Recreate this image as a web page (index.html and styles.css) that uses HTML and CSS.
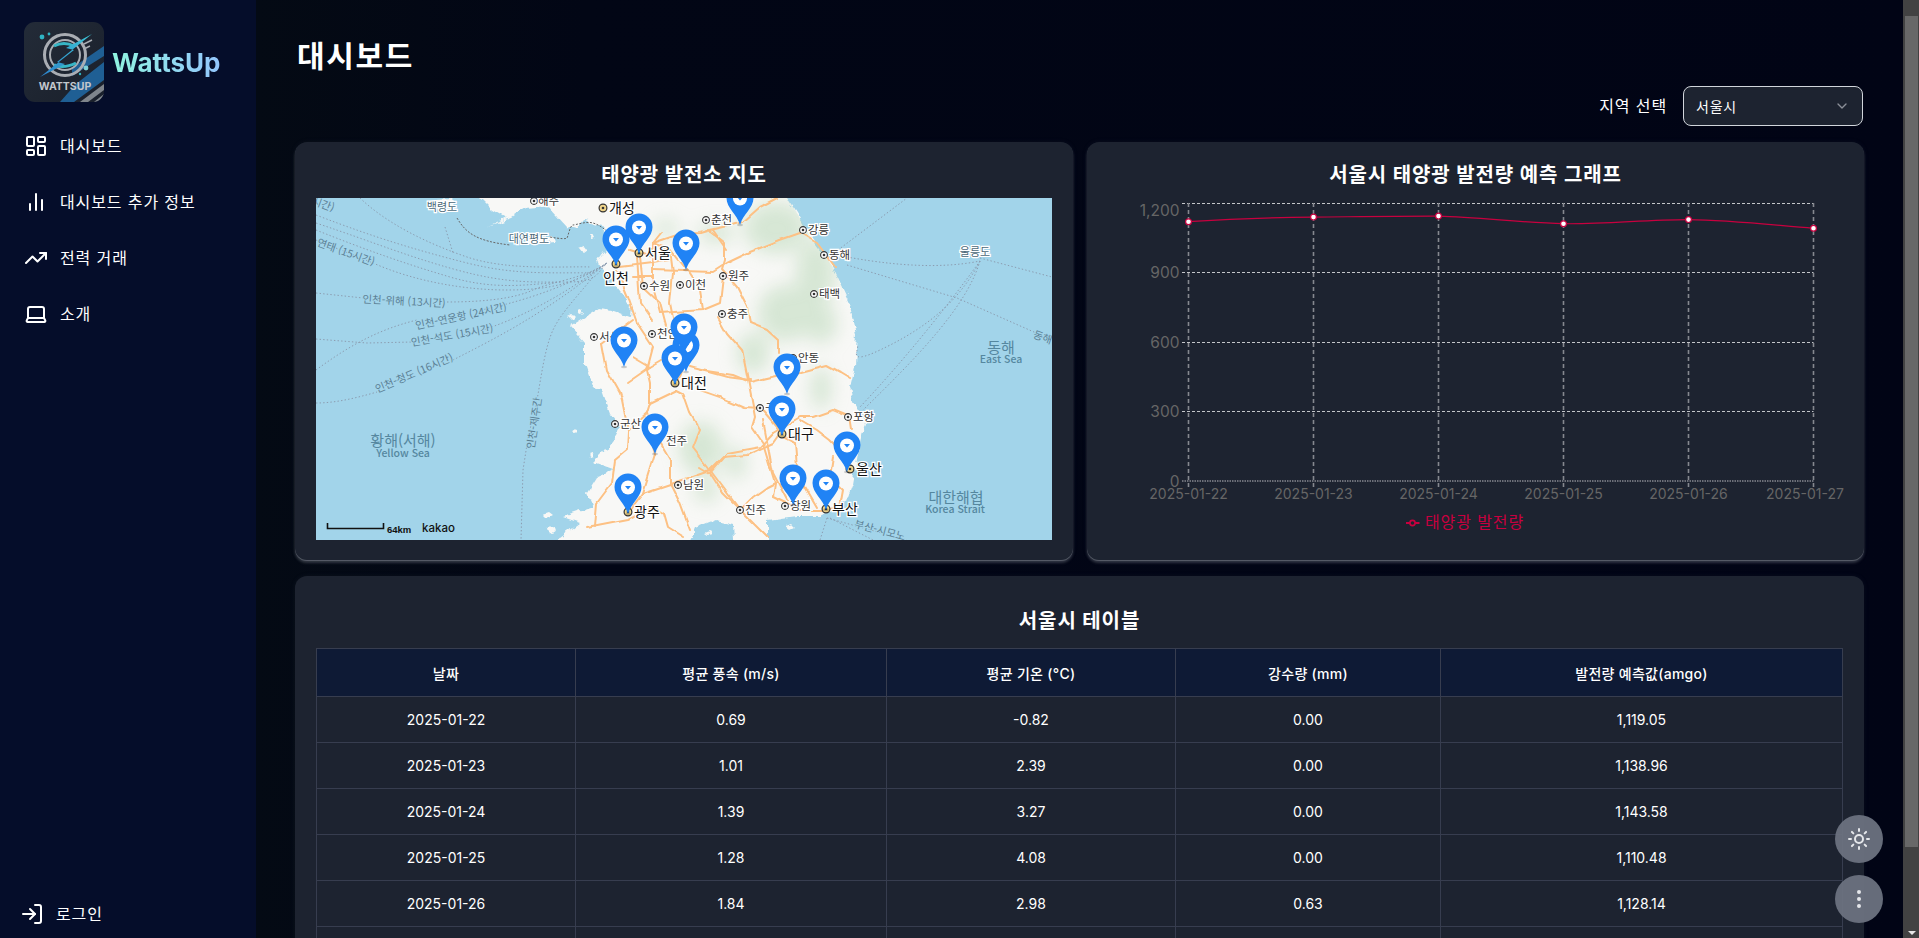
FILE: index.html
```html
<!DOCTYPE html>
<html lang="ko">
<head>
<meta charset="utf-8">
<title>WattsUp</title>
<link rel="stylesheet" href="styles.css">
</head>
<body>
<div class="app">
  <aside class="sidebar">
    <div class="brand">
      <svg class="logo" viewBox="0 0 80 80">
        <defs>
          <linearGradient id="lg" x1="0" y1="0" x2="1" y2="1"><stop offset="0" stop-color="#232b38"/><stop offset="1" stop-color="#1a202b"/></linearGradient>
          <linearGradient id="st" x1="0" y1="1" x2="1" y2="0"><stop offset="0" stop-color="#2b7fc9"/><stop offset="1" stop-color="#3cc7d6"/></linearGradient>
          <clipPath id="lc"><rect width="80" height="80" rx="11"/></clipPath>
        </defs>
        <g clip-path="url(#lc)">
          <rect width="80" height="80" fill="url(#lg)"/>
          <path d="M80 24L48 46v8L80 34zM80 40L52 62 36 80h14L80 58z" fill="#1f5f94"/>
          <path d="M80 62L56 80h8L80 68zM80 72L70 80h4L80 76z" fill="#7f858c"/>
          <circle cx="41" cy="33" r="20.5" fill="none" stroke="#a9adb3" stroke-width="3"/>
          <circle cx="41" cy="33" r="15" fill="none" stroke="#a9adb3" stroke-width="2"/>
          <path d="M30 24Q40 19 50 24M30 43Q40 47 52 41" fill="none" stroke="#37b6c6" stroke-width="3"/>
          <path d="M68 12L42 26 50 28 16 55 41 42 33 40z" fill="url(#st)"/>
          <path d="M60 22l8-4M60 27l6-3" stroke="#a9adb3" stroke-width="1.4"/>
          <circle cx="18" cy="15" r="2.4" fill="#2fb4c4"/><circle cx="25" cy="12" r="1.4" fill="#2fb4c4"/>
          <circle cx="62" cy="46" r="2.4" fill="#7fd0d6"/><circle cx="56" cy="52" r="1.2" fill="#2fb4c4"/>
          <text class="logo-text" x="41" y="67.5">WATTSUP</text>
        </g>
      </svg>
      <span class="brand-name">WattsUp</span>
    </div>
    <nav class="nav">
      <a class="nav-item"><svg class="icon" viewBox="0 0 24 24"><rect width="7" height="9" x="3" y="3" rx="1"/><rect width="7" height="5" x="14" y="3" rx="1"/><rect width="7" height="9" x="14" y="12" rx="1"/><rect width="7" height="5" x="3" y="16" rx="1"/></svg><span>대시보드</span></a>
      <a class="nav-item"><svg class="icon" viewBox="0 0 24 24"><path d="M18 20V10M12 20V4M6 20v-6"/></svg><span>대시보드 추가 정보</span></a>
      <a class="nav-item"><svg class="icon" viewBox="0 0 24 24"><polyline points="22 7 13.5 15.5 8.5 10.5 2 17"/><polyline points="16 7 22 7 22 13"/></svg><span>전력 거래</span></a>
      <a class="nav-item"><svg class="icon" viewBox="0 0 24 24"><path d="M20 16V7a2 2 0 0 0-2-2H6a2 2 0 0 0-2 2v9m16 0H4m16 0 1.28 2.55a1 1 0 0 1-.9 1.45H3.62a1 1 0 0 1-.9-1.45L4 16"/></svg><span>소개</span></a>
    </nav>
    <a class="nav-item login"><svg class="icon" viewBox="0 0 24 24"><path d="M15 3h4a2 2 0 0 1 2 2v14a2 2 0 0 1-2 2h-4"/><polyline points="10 17 15 12 10 7"/><line x1="15" y1="12" x2="3" y2="12"/></svg><span>로그인</span></a>
  </aside>

  <main class="main">
    <h1 class="page-title">대시보드</h1>
    <div class="filter-row">
      <label class="filter-label">지역 선택</label>
      <div class="select"><span>서울시</span>
        <svg class="chevron" viewBox="0 0 24 24"><path d="m6 9 6 6 6-6"/></svg>
      </div>
    </div>

    <div class="top-grid">
      <section class="card">
        <h2 class="card-title">태양광 발전소 지도</h2>
        <svg class="map" viewBox="0 0 736 342" width="736" height="342">
          <defs>
            <clipPath id="landclip"><path d="M164,0L176,12 190,20 172,28 195,20 210,10 232,8 250,28 262,30 268,22 282,26 290,36 294,48 284,60 280,66 290,72 301,90 315,108 314,119 295,112 284,110 254,129 268,145 268,165 277,190 286,192 294,215 304,229 299,239 287,255 277,265 297,272 281,279 271,295 277,309 247,319 264,325 241,342 375,342 380,330 400,322 417,326 418,342 452,342 452,322 480,318 505,318 530,304 537,285 544,245 549,225 537,205 534,189 539,169 541,135 534,105 517,69 494,38 481,15 471,0Z"/></clipPath>
            <filter id="blur" x="-30%" y="-30%" width="160%" height="160%"><feGaussianBlur stdDeviation="9"/></filter>
            <filter id="coast" x="-5%" y="-5%" width="110%" height="110%"><feTurbulence type="fractalNoise" baseFrequency=".09" numOctaves="3" seed="4"/><feDisplacementMap in="SourceGraphic" scale="8" xChannelSelector="R" yChannelSelector="G"/></filter>
            <filter id="wiggle" x="-5%" y="-5%" width="110%" height="110%"><feTurbulence type="fractalNoise" baseFrequency=".05" numOctaves="2" seed="9"/><feDisplacementMap in="SourceGraphic" scale="5" xChannelSelector="R" yChannelSelector="G"/></filter>
            <g id="pin"><ellipse cx="0" cy="0" rx="3" ry="1.2" fill="#000" opacity=".18"/><path d="M0,0C-3,-11 -13.5,-17 -13.5,-27A13.5,13.5 0 1 1 13.5,-27C13.5,-17 3,-11 0,0Z" fill="#2083f5"/><circle cx="0" cy="-26.5" r="7" fill="#fff"/><path d="M-3,-28h6l-3,3.4z" fill="#2083f5"/></g>
            <g id="dot"><circle r="3.4" fill="#fff" stroke="#333" stroke-width="1.1"/><circle r="1.3" fill="#333"/></g>
            <g id="big"><circle r="3.9" fill="#f0d58a" stroke="#333" stroke-width="1.2"/><circle r="1.3" fill="#333"/></g>
          </defs>
          <rect class="sea" width="736" height="342"/>
          <g class="land" filter="url(#coast)">
            <path d="M164,-10L164,0 176,12 190,20 172,28 195,20 210,10 232,8 250,28 262,30 268,22 282,26 290,36 294,48 284,60 280,66 290,72 301,90 315,108 314,119 295,112 284,110 254,129 268,145 268,165 277,190 286,192 294,215 304,229 299,239 287,255 277,265 297,272 281,279 271,295 277,309 247,319 264,325 241,342 241,352 375,352 375,342 380,330 400,322 417,326 418,342 418,352 452,352 452,322 480,318 505,318 530,304 537,285 544,245 549,225 537,205 534,189 539,169 541,135 534,105 517,69 494,38 481,15 471,0 471,-10Z"/>
            <path d="M264,50l5,-2 3,4 -4,3zM272,38l4,-1 2,4 -4,1zM252,118l4,-2 3,3 -3,3zM262,112l3,-1 2,3 -3,1zM226,316l6,-2 4,3 -6,3zM232,330l5,-1 2,3 -6,2zM212,40l26,-1 1,4 -26,2zM118,2l18,-1 2,8 -16,3zM430,336l6,-2 3,3 -5,2zM388,336l5,-2 2,3 -4,1zM470,328l5,-2 3,3 -4,2zM256,232l3,-1 1,3 -3,1zM274,256l3,-1 1,3 -3,1z"/>
          </g>
          <g clip-path="url(#landclip)">
            <g class="terrain" filter="url(#blur)">
              <ellipse cx="460" cy="30" rx="32" ry="26"/>
              <ellipse cx="500" cy="75" rx="20" ry="34"/>
              <ellipse cx="470" cy="115" rx="28" ry="28"/>
              <ellipse cx="505" cy="125" rx="16" ry="20"/>
              <ellipse cx="400" cy="35" rx="18" ry="10"/>
              <ellipse cx="437" cy="155" rx="16" ry="20"/>
              <ellipse cx="385" cy="250" rx="22" ry="26"/>
              <ellipse cx="390" cy="292" rx="12" ry="12"/>
              <ellipse cx="420" cy="265" rx="10" ry="16"/>
              <ellipse cx="505" cy="190" rx="10" ry="22"/>
              <ellipse cx="350" cy="30" rx="12" ry="8"/>
            </g>
          </g>
          <g class="road" filter="url(#wiggle)">
              <polyline points="337,45 364,36 384,35 394,32 417,27 427,24 444,9 461,0"/>
              <polyline points="337,72 397,74 411,65 434,54 464,42 484,35 501,45 520,70"/>
              <polyline points="392,32 409,45 409,62 406,72 421,89 431,109 434,125 451,132 462,142 462,155"/>
              <polyline points="402,119 411,135 426,152 432,182 439,219 436,229 447,245 459,285 457,299"/>
              <polyline points="384,172 417,177 434,184 464,177 484,174 511,167 524,174 534,180"/>
              <polyline points="374,169 411,179 434,182"/>
              <polyline points="384,192 404,199 427,209 444,210 466,236"/>
              <polyline points="457,235 484,219 497,219 517,212 534,219 536,232"/>
              <polyline points="467,239 479,245 481,269 487,285 501,309"/>
              <polyline points="484,222 501,232 514,242 524,252 531,269"/>
              <polyline points="517,259 514,279 527,292 524,309 510,312"/>
              <polyline points="457,299 484,312 510,312"/>
              <polyline points="424,312 437,299 451,289 459,285"/>
              <polyline points="424,312 394,272 357,285 327,295 314,312"/>
              <polyline points="271,330 312,322 337,309 347,315 351,329 367,339"/>
              <polyline points="361,192 334,205 331,215 312,232"/>
              <polyline points="361,192 367,195 374,215 384,232 377,250 394,272 407,259 431,257 457,245 464,235"/>
              <polyline points="344,245 354,262 354,285 364,305 374,332"/>
              <polyline points="286,145 291,172 304,195 306,202 312,232 311,252 299,262 296,285 281,305 279,329"/>
              <polyline points="324,59 327,89 344,105 351,132 371,159 364,179 359,185"/>
              <polyline points="301,72 312,99 321,125 337,149 331,172 334,185 334,205"/>
              <polyline points="314,52 337,59"/>
              <polyline points="304,69 337,65 354,62"/>
              <polyline points="317,79 337,79"/>
              <polyline points="337,45 337,89 344,115"/>
              <polyline points="321,59 324,105 336,122"/>
              <polyline points="354,52 357,75 354,105 359,130"/>
              <polyline points="411,52 397,32"/>
              <polyline points="344,115 387,112 404,105 407,79"/>
              <polyline points="387,112 384,92 371,72"/>
              <polyline points="286,145 317,122"/>
              <polyline points="317,159 334,169 351,159"/>
              <polyline points="311,185 334,169"/>
              <polyline points="447,222 457,275 471,302"/>
              <polyline points="384,269 394,275 407,295 424,312 451,339"/>
              <polyline points="394,275 411,255 444,249 457,235"/>
              <polyline points="339,256 331,215"/>
              <polyline points="339,256 327,295"/>
              <polyline points="370,72 354,52 337,45 345,35"/>
          </g>
          <g class="ferry">
            <path d="M44,0C70,25 110,45 151,59S250,68 274,69"/>
            <path d="M0,17C60,40 100,52 151,65S240,74 277,75"/>
            <path d="M0,25C60,45 90,58 141,72S220,84 251,84 280,76 291,65"/>
            <path d="M0,32C50,52 90,66 134,79S210,87 244,84"/>
            <path d="M0,42L57,65C100,84 150,92 191,92S260,86 291,65"/>
            <path d="M0,95L47,100M131,104C170,104 200,100 217,92S270,80 291,65"/>
            <path d="M0,172C30,150 60,132 101,122M165,112C200,105 250,90 291,65"/>
            <path d="M0,141L51,145 97,144M148,137C180,130 230,110 291,65"/>
            <path d="M0,205C20,205 40,200 61,194M137,162C180,140 230,115 291,65"/>
            <path d="M277,79C260,100 245,115 237,132S225,180 221,202L212,240 207,272 205,342"/>
            <path d="M129,29L137,55"/>
            <path d="M522,52L591,0"/>
            <path d="M531,59C570,66 620,72 664,63"/>
            <path d="M531,67L641,100 736,142"/>
            <path d="M664,60L736,79"/>
            <path d="M664,63C640,110 600,135 564,152S545,150 541,147"/>
            <path d="M664,63C630,110 590,160 544,209"/>
            <path d="M664,63C650,110 600,160 547,212"/>
            <path d="M511,320L591,342"/>
            <path d="M514,320L557,342"/>
            <path d="M511,320L504,342"/>
          </g>
          <path class="border" d="M141,20C150,35 160,43 194,47M234,39C245,41 250,41 251,40S254,27 257,27 270,23 277,25 290,32 296,38"/>
          <g class="t-sea">
            <text x="7" y="10" class="t-ferry" transform="rotate(20 7 7)">시간)</text>
            <text x="30" y="58" class="t-ferry" transform="rotate(20 30 54)">연태 (15시간)</text>
            <text x="88" y="107" class="t-ferry" transform="rotate(3 88 103)">인천-위해 (13시간)</text>
            <text x="145" y="122" class="t-ferry" transform="rotate(-12 145 118)">인천-연운항 (24시간)</text>
            <text x="136" y="141" class="t-ferry" transform="rotate(-10 136 137)">인천-석도 (15시간)</text>
            <text x="98" y="179" class="t-ferry" transform="rotate(-23 98 175)">인천-청도 (16시간)</text>
            <text x="218" y="229" class="t-ferry" transform="rotate(-82 218 225)">인천-제주간</text>
            <text x="727" y="143" class="t-ferry" transform="rotate(20 727 139)">동해</text>
            <text x="564" y="336" class="t-ferry" transform="rotate(15 564 332)">부산-시모노</text>
            <text x="87" y="248" class="t-water">황해(서해)</text>
            <text x="87" y="259" class="t-water-en">Yellow Sea</text>
            <text x="685" y="155" class="t-water">동해</text>
            <text x="685" y="165" class="t-water-en">East Sea</text>
            <text x="640" y="305" class="t-water">대한해협</text>
            <text x="639" y="315" class="t-water-en">Korea Strait</text>
          </g>
          <g class="t-island">
            <text x="126" y="13">백령도</text>
            <text x="213" y="45">대연평도</text>
            <text x="659" y="58">울릉도</text>
          </g>
          <use href="#big" x="287" y="10"/><use href="#big" x="323" y="55"/><use href="#big" x="300" y="66"/><use href="#big" x="359" y="185"/><use href="#big" x="312" y="314"/><use href="#big" x="466" y="236"/><use href="#big" x="534" y="271"/><use href="#big" x="510" y="311"/>
          <use href="#dot" x="218" y="3"/><use href="#dot" x="328" y="88"/><use href="#dot" x="364" y="87"/><use href="#dot" x="407" y="78"/><use href="#dot" x="406" y="116"/><use href="#dot" x="390" y="22"/><use href="#dot" x="278" y="139"/><use href="#dot" x="336" y="136"/><use href="#dot" x="299" y="226"/><use href="#dot" x="362" y="287"/><use href="#dot" x="424" y="312"/><use href="#dot" x="469" y="308"/><use href="#dot" x="532" y="219"/><use href="#dot" x="444" y="210"/><use href="#dot" x="477" y="160"/><use href="#dot" x="498" y="96"/><use href="#dot" x="508" y="57"/><use href="#dot" x="487" y="32"/>
          <g class="t-city">
            <text x="222" y="7">해주</text><text x="333" y="92">수원</text><text x="369" y="91">이천</text><text x="412" y="82">원주</text><text x="411" y="120">충주</text><text x="395" y="26">춘천</text><text x="283" y="143">서산</text><text x="341" y="140">천안</text><text x="304" y="230">군산</text><text x="350" y="247">전주</text><text x="367" y="291">남원</text><text x="429" y="316">진주</text><text x="474" y="312">창원</text><text x="537" y="223">포항</text><text x="449" y="214">구미</text><text x="482" y="164">안동</text><text x="503" y="100">태백</text><text x="513" y="61">동해</text><text x="492" y="36">강릉</text>
          </g>
          <g class="t-major">
            <text x="293" y="15">개성</text><text x="329" y="60">서울</text><text x="287" y="85">인천</text><text x="365" y="190">대전</text><text x="318" y="319">광주</text><text x="472" y="241">대구</text><text x="540" y="276">울산</text><text x="516" y="316">부산</text>
          </g>
          <use href="#pin" x="424" y="27"/><use href="#pin" x="323" y="56"/><use href="#pin" x="300" y="68"/><use href="#pin" x="370" y="72"/><use href="#pin" x="308" y="169"/><use href="#pin" x="370" y="174"/><use href="#pin" x="368" y="156"/><use href="#pin" x="359" y="187"/><use href="#pin" x="471" y="196"/><use href="#pin" x="466" y="238"/><use href="#pin" x="339" y="256"/><use href="#pin" x="312" y="316"/><use href="#pin" x="531" y="274"/><use href="#pin" x="477" y="307"/><use href="#pin" x="510" y="312"/>
          <path class="scalebar" d="M11.5,325v5.5h56v-5.5"/>
          <text class="t-scale" x="71" y="335">64km</text>
          <text class="t-kakao" x="106" y="334">kakao</text>
        </svg>
      </section>

      <section class="card">
        <h2 class="card-title">서울시 태양광 발전량 예측 그래프</h2>
        <svg class="chart" viewBox="0 0 735 342" width="735" height="342">
          <g class="grid-h">
            <line x1="74" x2="705.5" y1="5.5" y2="5.5"/><line x1="74" x2="705.5" y1="74.5" y2="74.5"/><line x1="74" x2="705.5" y1="144.5" y2="144.5"/><line x1="74" x2="705.5" y1="213.5" y2="213.5"/>
          </g>
          <g class="grid-v">
            <line x1="80.5" x2="80.5" y1="5" y2="290"/><line x1="205.5" x2="205.5" y1="5" y2="290"/><line x1="330.5" x2="330.5" y1="5" y2="290"/><line x1="455.5" x2="455.5" y1="5" y2="290"/><line x1="580.5" x2="580.5" y1="5" y2="290"/><line x1="705.5" x2="705.5" y1="5" y2="290"/>
          </g>
          <line class="axis-zero" x1="74" x2="705.5" y1="283" y2="283"/>
          <g class="tick-y">
            <text x="71.5" y="18">1,200</text><text x="71.5" y="80">900</text><text x="71.5" y="150">600</text><text x="71.5" y="219">300</text><text x="71.5" y="289">0</text>
          </g>
          <g class="tick-x">
            <text x="80.5" y="301">2025-01-22</text><text x="205.5" y="301">2025-01-23</text><text x="330.5" y="301">2025-01-24</text><text x="455.5" y="301">2025-01-25</text><text x="580.5" y="301">2025-01-26</text><text x="697" y="301">2025-01-27</text>
          </g>
          <path class="series" d="M80.5,23.7C122,21 164,19.5 205.5,19.1S289,18 330.5,18.1C372,19 414,25 455.5,25.7S539,21.5 580.5,21.6C622,22 664,27 705.5,30.3"/>
          <g class="point">
            <circle cx="80.5" cy="23.7" r="2.9"/><circle cx="205.5" cy="19.1" r="2.9"/><circle cx="330.5" cy="18.1" r="2.9"/><circle cx="455.5" cy="25.7" r="2.9"/><circle cx="580.5" cy="21.6" r="2.9"/><circle cx="705.5" cy="30.3" r="2.9"/>
          </g>
          <line class="legend-line" x1="298" x2="311.5" y1="325" y2="325"/>
          <circle class="legend-dot" cx="304.5" cy="325" r="2.6"/>
          <text class="legend-text" x="317" y="325.5">태양광 발전량</text>
        </svg>
      </section>
    </div>

    <section class="card table-card">
      <h2 class="card-title">서울시 테이블</h2>
      <table class="data-table">
        <colgroup><col class="c1"><col class="c2"><col class="c3"><col class="c4"><col class="c5"></colgroup>
        <thead><tr><th>날짜</th><th>평균 풍속 (m/s)</th><th>평균 기온 (°C)</th><th>강수량 (mm)</th><th>발전량 예측값(amgo)</th></tr></thead>
        <tbody>
          <tr><td>2025-01-22</td><td>0.69</td><td>-0.82</td><td>0.00</td><td>1,119.05</td></tr>
          <tr><td>2025-01-23</td><td>1.01</td><td>2.39</td><td>0.00</td><td>1,138.96</td></tr>
          <tr><td>2025-01-24</td><td>1.39</td><td>3.27</td><td>0.00</td><td>1,143.58</td></tr>
          <tr><td>2025-01-25</td><td>1.28</td><td>4.08</td><td>0.00</td><td>1,110.48</td></tr>
          <tr><td>2025-01-26</td><td>1.84</td><td>2.98</td><td>0.63</td><td>1,128.14</td></tr>
          <tr><td></td><td></td><td></td><td></td><td></td></tr>
        </tbody>
      </table>
    </section>
  </main>

  <div class="scrollbar"><div class="sb-thumb"></div><div class="sb-arrow"></div></div>
</div>

<div class="fab-stack">
  <button class="fab"><svg class="icon fab-icon" viewBox="0 0 24 24"><circle cx="12" cy="12" r="4"/><path d="M12 2v2M12 20v2M4.93 4.93l1.41 1.41M17.66 17.66l1.41 1.41M2 12h2M20 12h2M6.34 17.66l-1.41 1.41M19.07 4.93l-1.41 1.41"/></svg></button>
  <button class="fab"><svg class="icon fab-icon" viewBox="0 0 24 24"><circle cx="12" cy="12" r="1"/><circle cx="12" cy="5" r="1"/><circle cx="12" cy="19" r="1"/></svg></button>
</div>
</body>
</html>
```

FILE: styles.css
```css
* { box-sizing: border-box; }
html, body { margin: 0; height: 100%; overflow: hidden; }
body {
  font-family: Inter, "Noto Sans CJK KR", sans-serif;
  color: #fff;
  background: #020714;
}
.app { display: flex; height: 938px; }

/* sidebar */
.sidebar {
  width: 256px;
  flex: none;
  background: #050d2a;
  display: flex;
  flex-direction: column;
  padding-top: 22px;
}
.brand { display: flex; align-items: center; gap: 8px; padding-left: 24px; margin-bottom: 16px; }
.logo { width: 80px; height: 80px; display: block; }
.logo-text { font: 700 10.5px Inter, sans-serif; fill: #c3c7cc; text-anchor: middle; }
.brand-name {
  font-size: 26px;
  font-weight: 700;
  line-height: 32px;
  margin-top: 2px;
  background: linear-gradient(90deg, #8ff3e0, #93c5fd);
  -webkit-background-clip: text;
  background-clip: text;
  color: transparent;
}
.nav { display: flex; flex-direction: column; flex: 1; }
.nav-item {
  display: flex;
  align-items: center;
  gap: 12px;
  height: 56px;
  padding-left: 24px;
  font-size: 16px;
  letter-spacing: .055em;
  color: #fff;
}
.nav-item span { margin-bottom: 2px; }
.login { padding-left: 20px; height: 48px; }
.icon { width: 24px; height: 24px; flex: none; fill: none; stroke: currentColor; stroke-width: 2; stroke-linecap: round; stroke-linejoin: round; }

/* main */
.main {
  flex: 1;
  min-width: 0;
  padding: 36px 39px 0;
  overflow: hidden;
  background: linear-gradient(90deg, #040a14, #020615 20%, #010415);
}
.page-title { margin: 0 0 0 2px; font-size: 30px; line-height: 40px; font-weight: 700; letter-spacing: .055em; }
.filter-row { display: flex; justify-content: flex-end; align-items: center; gap: 16px; margin-top: 10px; height: 40px; padding-right: 1px; }
.filter-label { font-size: 16px; letter-spacing: .055em; margin-bottom: 2px; }
.select {
  width: 180px;
  height: 40px;
  display: flex;
  align-items: center;
  justify-content: space-between;
  padding: 0 12px 0 12px;
  background: #1d2330;
  border: 1px solid #d1d5db;
  border-radius: 8px;
  font-size: 14px;
  letter-spacing: .055em;
}
.chevron { width: 16px; height: 16px; fill: none; stroke: #8b8f98; stroke-width: 2; stroke-linecap: round; stroke-linejoin: round; }
.top-grid { display: grid; grid-template-columns: 1fr 1fr; gap: 14px; margin-top: 16px; }
.card {
  background: #1d2330;
  border-radius: 12px;
  padding: 19px 21px 20px;
  height: 418px;
  box-shadow: 0 1px 0 #555a66, 0 3px 3px rgba(120, 125, 135, .4), 0 0 5px rgba(70, 75, 90, .15);
}
.card-title { margin: 0 0 9px; font-size: 20px; line-height: 28px; font-weight: 700; text-align: center; letter-spacing: .045em; }
.table-card { margin-top: 16px; height: auto; padding-top: 31px; box-shadow: 0 0 5px rgba(70, 75, 90, .15); }
.table-card .card-title { margin-bottom: 13px; }

/* map */
.map { display: block; overflow: hidden; }
.chart { display: block; overflow: visible; }
.sea { fill: #a2d4ea; }
.land { fill: #f8f8f6; }
.terrain { fill: #b5d6b4; opacity: .5; }
.road { fill: none; stroke: #fdc184; stroke-width: 2; stroke-linejoin: round; stroke-linecap: round; }
.ferry { fill: none; stroke: #8b9cb0; stroke-width: 1; stroke-dasharray: 1.4 2.2; }
.border { fill: none; stroke: #666; stroke-width: 1; stroke-dasharray: 2 1.5; }
.t-sea text, .t-island text, .t-city text, .t-major text { font-family: "Noto Sans CJK KR", sans-serif; paint-order: stroke; }
.t-ferry { font-size: 10.5px; fill: #5b7f94; stroke: #a2d4ea; stroke-width: 2px; text-anchor: middle; }
.t-water { font-size: 15px; fill: #55879f; text-anchor: middle; }
.t-water-en { font-size: 10.5px; fill: #55879f; text-anchor: middle; font-weight: 500; }
.t-island text { font-size: 11px; fill: #4c6878; stroke: #fff; stroke-width: 2.5px; text-anchor: middle; }
.t-city text { font-size: 11.5px; fill: #333; stroke: #fff; stroke-width: 2.5px; }
.t-major text { font-size: 14px; fill: #111; stroke: #fff; stroke-width: 2.5px; }
.scalebar { fill: none; stroke: #111; stroke-width: 1.6; }
.t-scale { font: 700 9.5px "Liberation Sans", sans-serif; fill: #111; }
.t-kakao { font: 500 11.5px Inter, sans-serif; fill: #111; }

/* chart */
.grid-h line { stroke: #c4c6ca; stroke-width: 1.2; stroke-dasharray: 3 2; }
.grid-v line { stroke: #85888f; stroke-width: 1.6; stroke-dasharray: 4 3; }
.axis-zero { stroke: #85888f; stroke-width: 1.6; stroke-dasharray: 1.5 1; }
.tick-y text { font-size: 15.5px; fill: #666; text-anchor: end; }
.tick-x text { font-size: 14px; fill: #666; text-anchor: middle; }
.series { fill: none; stroke: #c8003f; stroke-width: 1.2; }
.point circle { fill: #fff; stroke: #c8003f; stroke-width: 1.2; }
.legend-line { stroke: #c8003f; stroke-width: 2; }
.legend-dot { fill: #1d2330; stroke: #c8003f; stroke-width: 1.6; }
.legend-text { font-size: 16px; fill: #c8003f; dominant-baseline: middle; letter-spacing: .055em; }

/* table */
.data-table { width: 100%; border-collapse: collapse; table-layout: fixed; font-size: 14px; }
.c1 { width: 259px; } .c2 { width: 311px; } .c3 { width: 289px; } .c4 { width: 265px; } .c5 { width: 402px; }
.data-table th, .data-table td { border: 1px solid #373d4f; text-align: center; padding: 0; }
.data-table th { background: #0e1a35; height: 48px; font-weight: 500; font-size: 14px; letter-spacing: .02em; }
.data-table td { height: 46px; }

/* scrollbar + floating buttons */
.scrollbar { width: 16px; flex: none; background: #424242; padding: 16px 1px 0 2px; position: relative; display: flex; flex-direction: column; }
.sb-thumb { height: 831px; background: #686868; }
.sb-arrow { margin: auto auto 3px; width: 0; height: 0; border: 4px solid transparent; border-top-color: #e6e6e6; border-bottom: 0; }
.fab-stack { position: fixed; left: 1835px; top: 815px; display: flex; flex-direction: column; gap: 12px; }
.fab { width: 48px; height: 48px; border: 0; padding: 0; border-radius: 50%; background: rgba(107, 114, 128, .95); color: #e5e7eb; display: flex; align-items: center; justify-content: center; }
```
